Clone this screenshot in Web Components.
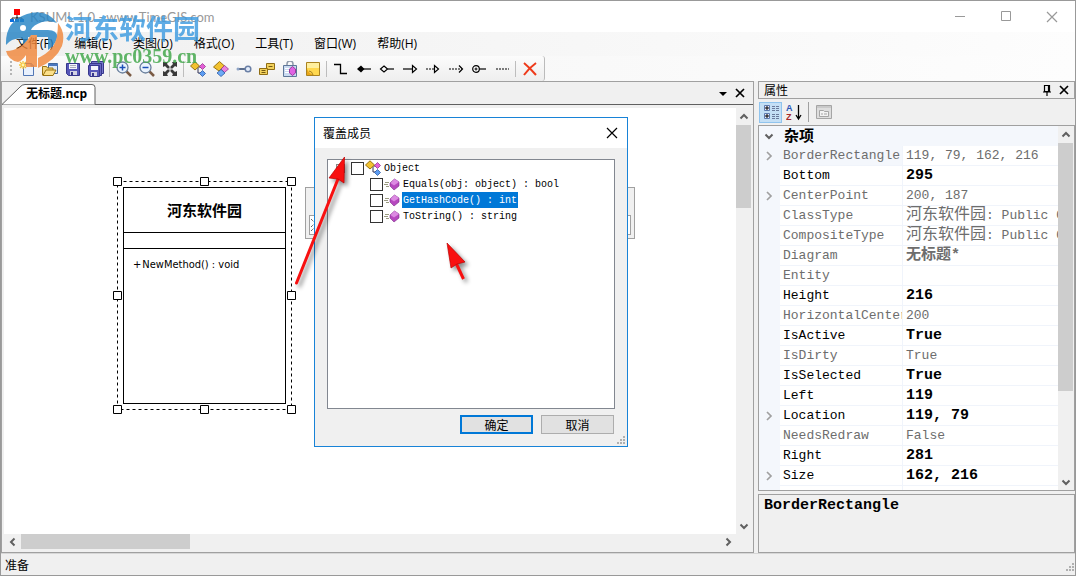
<!DOCTYPE html>
<html lang="zh-CN">
<head>
<meta charset="utf-8">
<title>KSUML 1.0 - www.TimeGIS.com</title>
<style>
html, body { margin: 0; height: 100%; }
body { font: 12px/16px "Liberation Sans", "Noto Sans CJK SC", sans-serif; color: #000; background: #f0f0f0; overflow: hidden; }
</style>
</head>
<body>
<ks-window>
  <ks-titlebar slot="top" text="KSUML 1.0 - www.TimeGIS.com"></ks-titlebar>
  <ks-menubar slot="top"></ks-menubar>
  <ks-toolbar slot="top"></ks-toolbar>
  <ks-document slot="main" name="无标题.ncp">
    <ks-member-bar></ks-member-bar>
    <ks-class-node name="河东软件园">NewMethod() : void</ks-class-node>
  </ks-document>
  <ks-properties slot="side"></ks-properties>
  <ks-statusbar slot="bottom">准备</ks-statusbar>
  <ks-override-dialog slot="over"></ks-override-dialog>
  <ks-arrows slot="over"></ks-arrows>
  <ks-watermark slot="over"></ks-watermark>
</ks-window>
<script>
const ICONS = {
  app: '<rect x="5" y="0" width="6" height="6" fill="#f00"/><path d="M8 6v3M3 11V9h10v2M8 8v3" stroke="#222" fill="none"/><path d="M1 10h4v3H1zM6 10h4v3H6zM11 10h4v3h-4z" fill="#0a6ede"/>',
  new: '<path d="M4.5 2.5h8l2 2v10h-10z" fill="#e9f1fd" stroke="#5277b5"/><path d="M12 2v3h3" fill="#9db9e6" stroke="#5277b5"/><path d="M4 0v8M0 4h8M1 1l6 6M7 1L1 7" stroke="#f5c33b" stroke-width="1.3"/><circle cx="4" cy="4" r="1.4" fill="#fff3b0"/>',
  open: '<path d="M6.500 2.500h9v10h-9z" fill="#dce9fa" stroke="#41689f"/><path d="M6 3h10v2H6z" fill="#4b77bd"/><path d="M.5 14V5.500h4l1 1.500h5.500v7z" fill="#f4d47a" stroke="#9a7410"/><path d="M1 14.500l3-5.500h10l-3 5.500z" fill="#fbe08b" stroke="#9a7410"/>',
  save: '<path d="M1.500 2.500h13v12h-11l-2-2z" fill="#5656b8" stroke="#37378c"/><path d="M4 3h8v5H4z" fill="#f4f4fc"/><path d="M5 10h7v4H5z" fill="#d4d4e4"/><path d="M6 11h2v3H6z" fill="#37378c"/><path d="M5 4.500h6M5 6.500h6" stroke="#aab"/>',
  saveall: '<path d="M3.500.500h12v12h-12z" fill="#7777cb" stroke="#37378c"/><path d="M1.500 2.500h12v12h-12z" fill="#6868c4" stroke="#37378c"/><path d="M.5 4.500h11v11H2l-1.500-2z" fill="#5656b8" stroke="#37378c"/><path d="M3 5h7v4H3z" fill="#f4f4fc"/><path d="M3 11h6v4H3z" fill="#d4d4e4"/><path d="M4 12h2v3H4z" fill="#37378c"/>',
  zoomin: '<path d="M10 10l5 5" stroke="#7b5b45" stroke-width="2.500"/><circle cx="6.500" cy="6.500" r="5.500" fill="#eaf3fd" stroke="#6a7f9c" stroke-width="1.300"/><path d="M3.500 6.500h6M6.500 3.500v6" stroke="#1c50b8" stroke-width="1.500"/>',
  zoomout: '<path d="M10 10l5 5" stroke="#7b5b45" stroke-width="2.500"/><circle cx="6.500" cy="6.500" r="5.500" fill="#eaf3fd" stroke="#6a7f9c" stroke-width="1.300"/><path d="M3.500 6.500h6" stroke="#1c50b8" stroke-width="1.500"/>',
  fit: '<path d="M1 1h5L5 3l2.500 2.500v2h-2L3 5 1 6zM15 1h-5l1 2-2.500 2.500v2h2L13 5l2 1zM1 15h5l-1-2 2.500-2.500v-2h-2L3 11l-2-1zM15 15h-5l1-2-2.500-2.500v-2h2L13 11l2-1z" fill="#3a3a3a"/>',
  cls: '<path d="M7 6h4M8 7v5h3" stroke="#335" fill="none"/><path d="M5 .800L9.500 5 5 9 .500 5z" fill="#f2c230" stroke="#9a7410"/><path d="M12.500 2.500l3 3-3 3-3-3z" fill="#e45fd6" stroke="#8d2a86" stroke-width=".7"/><path d="M12.500 9.500l3 3-3 3-3-3z" fill="#5c9cf2" stroke="#1d4d9c" stroke-width=".7"/>',
  struct: '<path d="M6.500.500L11.500 5 6 10 .500 6z" fill="#f2c230" stroke="#9a7410"/><path d="M11.500 4.500l4 3.500-4 3.500L8 8z" fill="#ea82de" stroke="#8d2a86" stroke-width=".7"/><path d="M8 8.500l4 3.500-4 3.500L4 12z" fill="#6eaaf6" stroke="#1d4d9c" stroke-width=".7"/>',
  iface: '<path d="M2 8h8" stroke="#5d6f8e" stroke-width="2"/><circle cx="2" cy="8" r="1.500" fill="#8fa4c6"/><circle cx="12" cy="8" r="2.800" fill="#e4edfb" stroke="#6a7fa5" stroke-width="1.500"/>',
  enum: '<path d="M7.500 2.500h8v6h-8z" fill="#f2d15c" stroke="#8f6d14"/><path d="M.5 7.500h8v6h-8z" fill="#f2d15c" stroke="#8f6d14"/><path d="M9.500 5.500h4M2.500 9.500h4M2.500 11.500h4" stroke="#745a12"/>',
  delegate: '<path d="M5 5V3a3 3 0 0 1 6 0v2" fill="none" stroke="#8f9aaa" stroke-width="1.500"/><path d="M1.500 4.500h13v11h-13z" fill="#c9daf0" stroke="#5d7698"/><path d="M3 7.500h5M3 9.500h4M3 11.500h4" stroke="#fff"/><path d="M10.500 5.500l3 2.500v4l-3 2.500-3-2.500V8z" fill="#e162e3" stroke="#963a9c"/>',
  note: '<path d="M1.500 1.500h13v13h-13z" fill="#ffd84f" stroke="#a9821f"/><path d="M2 2h12v5H2z" fill="#ffef9e"/><path d="M2 8q2 5 7 6H2z" fill="#e9a61a"/><path d="M4 10q3 0 4 4" fill="none" stroke="#a9821f"/>',
  line: '<path d="M1 3.500h6.500v9H14" fill="none" stroke="#000" stroke-width="1.300"/>',
  compose: '<path d="M5 8h10" stroke="#000" stroke-width="1.200"/><path d="M5 4.500L8.500 8 5 11.500 1 8z"/>',
  aggregate: '<path d="M8.500 8H15" stroke="#000" stroke-width="1.200"/><path d="M5 5l3.500 3L5 11 1.500 8z" fill="#fff" stroke="#000" stroke-width="1.200"/>',
  inherit: '<path d="M1 8h10" stroke="#000" stroke-width="1.200"/><path d="M10.500 4.500v7L14.500 8z" fill="#fff" stroke="#000" stroke-width="1.200"/>',
  realize: '<path d="M1 8h9" stroke="#000" stroke-dasharray="2 1" stroke-width="1.200"/><path d="M9.500 4.500v7l4-3.500z" fill="#fff" stroke="#000" stroke-width="1.200"/>',
  depend: '<path d="M1 8h13" stroke="#000" stroke-dasharray="2 1" stroke-width="1.200"/><path d="M11 4.500L14.500 8 11 11.500" fill="none" stroke="#000" stroke-width="1.200"/>',
  nest: '<path d="M8 8h7" stroke="#000" stroke-width="1.200"/><circle cx="5" cy="8" r="3.300" fill="#fff" stroke="#000" stroke-width="1.200"/><path d="M3.500 8h3M5 6.500v3" stroke="#000"/>',
  dots: '<path d="M2 8h13" stroke="#000" stroke-dasharray="2 1" stroke-width="1.200"/>',
  del: '<path d="M2 2q6 5 12 12M14 2Q7 7 2 14" fill="none" stroke="#ee3a1a" stroke-width="2"/>',
  method: '<path d="M1 6.500h4M0 8.500h4M2 10.500h3" stroke="#9a9a80"/><path d="M10.500 3L15 6v4l-5 4-4-4V7z" fill="#b648bf" stroke="#7c2c88" stroke-width=".6"/><path d="M10.500 3L15 6l-5 3.500L6.500 7z" fill="#dc8ae2"/>',
  category: '<path d="M1.500 1.500h5v5h-5zM1.500 9.500h5v5h-5z" fill="#eef" stroke="#5d79ac"/><path d="M2 4h4M4 2v4M2 12h4M4 10v4" stroke="#000"/><path d="M9 2.500h3M13 2.500h3M9 4.500h3M13 4.500h3M9 6.500h3M13 6.500h3M9 10.500h3M13 10.500h3M9 12.500h3M13 12.500h3M9 14.500h3M13 14.500h3" stroke="#6a7a9a"/>',
  page: '<path d="M.5 1.500h15v13H.500z" fill="#dedede" stroke="#a5a5a5"/><path d="M1 3h14" stroke="#b5b5b5"/><path d="M3.500 6.500h4l1 1h4v5h-9z" fill="#f2f2f2" stroke="#a5a5a5"/><path d="M5 10h2M8 10h3" stroke="#a5a5a5"/>',
  pin: '<path d="M5.500 3.500h5v6h-5zM9.500 4v5M4 10h8M8 10v4" fill="none" stroke="#000" stroke-width="1.200"/>',
  cross: '<path d="M4 4l8 8M12 4l-8 8" stroke="#000" stroke-width="1.700"/>',
  thinx: '<path d="M3 3l10 10M13 3L3 13" stroke="currentColor" stroke-width="1.200"/>',
  min: '<path d="M3 7.500h10" stroke="currentColor"/>',
  max: '<path d="M3.500 2.500h9v9h-9z" fill="none" stroke="currentColor"/>',
  drop: '<path d="M4 7h8l-4 4z"/>',
  up: '<path d="M4.500 9.500L8 6l3.500 3.500" fill="none" stroke="#606060" stroke-width="2"/>',
  down: '<path d="M4.500 6.500L8 10l3.500-3.500" fill="none" stroke="#606060" stroke-width="2"/>',
  left: '<path d="M9.500 4.500L6 8l3.500 3.500" fill="none" stroke="#606060" stroke-width="2"/>',
  right: '<path d="M6.500 4.500L10 8l-3.500 3.500" fill="none" stroke="#606060" stroke-width="2"/>',
  expand: '<path d="M6 4l4 4-4 4" fill="none" stroke="#a0a0a0" stroke-width="1.700"/>',
  grip: '<path d="M13 6h2v2h-2zM10 9h2v2h-2zM13 9h2v2h-2zM7 12h2v2H7zM10 12h2v2h-2zM13 12h2v2h-2z" fill="#b0b0b0"/>'
};

function component(tag, html, setup) {
  customElements.define(tag, class extends HTMLElement {
    connectedCallback() {
      if (this.shadowRoot) return;
      const root = this.attachShadow({ mode: 'open' });
      const tpl = document.createElement('template');
      tpl.innerHTML = '<style>*{box-sizing:border-box}button{font:inherit;color:inherit;border:0;padding:0;margin:0;background:none}</style>' + html;
      root.append(tpl.content.cloneNode(true));
      if (setup) setup(this, root);
    }
  });
}

component('ks-icon', '<style>:host{display:block;flex:none;width:16px;height:16px}svg{display:block}</style><svg width="16" height="16" viewBox="0 0 16 16" aria-hidden="true"></svg>',
  (el, root) => { root.querySelector('svg').innerHTML = ICONS[el.getAttribute('name')]; });

component('ks-window', `<style>
  :host{position:relative;display:flex;flex-direction:column;box-sizing:border-box;height:100vh;border:1px solid #999;background:#f0f0f0}
  .work{flex:1;min-height:0;display:grid;grid-template-columns:minmax(0,1fr) 317px;gap:4px}
</style>
<slot name="top"></slot>
<div class="work"><slot name="main"></slot><slot name="side"></slot></div>
<slot name="bottom"></slot><slot name="over"></slot>`);

component('ks-titlebar', `<style>
  :host{display:flex;align-items:center;height:31px;background:#fff;color:#999;padding-left:8px;box-sizing:border-box}
  h1{flex:1;margin:0 0 0 5px;font:13px/18px Lato,sans-serif}
  button{width:46px;height:28px;display:grid;place-items:center;color:#999}
</style>
<ks-icon name="app"></ks-icon><h1></h1>
<button aria-label="最小化"><ks-icon name="min"></ks-icon></button>
<button aria-label="最大化"><ks-icon name="max"></ks-icon></button>
<button aria-label="关闭"><ks-icon name="thinx"></ks-icon></button>`,
  (el, root) => { root.querySelector('h1').textContent = el.getAttribute('text'); });

component('ks-menubar', `<style>
  :host{display:flex;align-items:center;height:24px;padding-left:15px;gap:21px;background:linear-gradient(90deg,#f0f0f0,#fdfdfd)}
  button{font:12px/16px "Open Sans","Noto Sans CJK SC",sans-serif}
</style>
<button>文件(F)</button><button>编辑(E)</button><button>类图(D)</button><button>格式(O)</button><button>工具(T)</button><button>窗口(W)</button><button>帮助(H)</button>`);

component('ks-toolbar', `<style>
  :host{display:flex;height:25px;background:linear-gradient(90deg,#f4f4f4,#fdfdfd)}
  div{display:flex;align-items:center;padding:0 3px 0 14px;background:linear-gradient(#fcfcfc,#eeeeee);border-radius:0 3px 3px 0;border-right:1px solid #bbb;position:relative}
  div::before{content:"";position:absolute;left:9px;top:5px;width:2px;height:14px;background:repeating-linear-gradient(#b5b5b5 0 2px,transparent 2px 4px)}
  button{width:23px;height:24px;display:grid;place-items:center}
  i{width:1px;height:16px;margin:0 2px;background:#bdbdbd}
</style><div></div>`, (el, root) => {
  root.querySelector('div').innerHTML = 'new open save saveall | zoomin zoomout fit | cls struct iface enum delegate note | line compose aggregate inherit realize depend nest dots | del'
    .split(' ').map(n => n === '|' ? '<i></i>' : `<button aria-label="${n}"><ks-icon name="${n}"></ks-icon></button>`).join('');
});

component('ks-scrollbar', `<style>
  :host{display:flex;background:#f0f0f0;flex-direction:column;overflow:hidden}
  :host([horizontal]){flex-direction:row}
  .track{flex:1;min-height:0;min-width:0;display:flex;flex-direction:inherit}
  .thumb{background:#cdcdcd;flex:0 0 var(--thumb)}
  button{width:15px;height:17px;display:grid;place-items:center}
  :host([horizontal]) button{width:17px;height:15px}
</style>
<button><ks-icon></ks-icon></button><div class="track"><div class="thumb"></div></div><button><ks-icon></ks-icon></button>`,
  (el, root) => {
    const h = el.hasAttribute('horizontal');
    root.querySelectorAll('button').forEach((b, i) => {
      const n = h ? ['left', 'right'][i] : ['up', 'down'][i];
      b.setAttribute('aria-label', n);
      b.innerHTML = `<ks-icon name="${n}"></ks-icon>`;
    });
  });

component('ks-document', `<style>
  :host{display:flex;flex-direction:column;min-width:0;border:1px solid #a0a0a0;background:#f0f0f0}
  header{flex:none;display:flex;align-items:flex-end;height:23px;border-bottom:1px solid #606060;padding-right:5px}
  .tab{position:relative;width:96px;height:21px;margin-bottom:-1px}
  .tab svg{position:absolute;inset:0}
  .tab button{position:relative;padding-left:24px;height:20px;font:bold 12px/18px "Open Sans","Noto Sans CJK SC",sans-serif;white-space:nowrap;display:block}
  .fill{flex:1}
  .tool{width:17px;height:22px;display:grid;place-items:center}
  .body{flex:1;min-height:0;display:grid;grid-template:minmax(0,1fr) 15px/minmax(0,1fr) 15px;padding:3px 2px}
  .canvas{position:relative;background:#fff;overflow:hidden}
</style>
<header><div class="tab"><svg width="96" height="21"><path d="M0 20.500L18 3Q20 .500 23 .500h67q3 0 3 3v17" fill="#fff" stroke="#606060"/></svg><button></button></div><span class="fill"></span>
<button class="tool" aria-label="列表"><ks-icon name="drop"></ks-icon></button><button class="tool" aria-label="关闭"><ks-icon name="cross"></ks-icon></button></header>
<div class="body"><div class="canvas"><slot></slot></div><ks-scrollbar style="--thumb:83px"></ks-scrollbar><ks-scrollbar horizontal style="--thumb:169px"></ks-scrollbar></div>`,
  (el, root) => { root.querySelector('.tab button').textContent = el.getAttribute('name'); });

component('ks-member-bar', `<style>
  :host{position:absolute;left:301px;top:79px;width:330px;height:52px;box-sizing:border-box;border:1px solid #a0a0a0;background:#f0f0f0;padding:27px 3px 3px}
  div{height:100%;border:1px solid #a0a0a0;background:#fff;overflow:hidden}
  svg{display:block}
</style><div><svg width="16" height="20"><path d="M1 3l4 4M1 11l4-4M1 15l3-3" stroke="#222" stroke-dasharray="1 1" fill="none"/></svg></div>`);

component('ks-class-node', `<style>
  :host{position:absolute;left:113px;top:73px;width:175px;height:229px;box-sizing:border-box;padding:6px}
  svg{position:absolute;inset:0;overflow:visible}
  section{display:flex;flex-direction:column;height:100%;border:1px solid #000;background:#fff}
  h2{margin:0;height:45px;border-bottom:1px solid #000;font:bold 15px/44px "Noto Sans CJK SC",sans-serif;text-align:center}
  .fields{height:16px;border-bottom:1px solid #000}
  .methods{padding:8px 9px;font:11px/16px "DejaVu Sans Condensed","Open Sans",sans-serif;display:flex;gap:1px;white-space:nowrap}
</style>
<section><h2></h2><div class="fields"></div><div class="methods"><span>+</span><slot></slot></div></section>
<svg width="175" height="229"><rect x=".5" y=".5" width="174" height="228" fill="none" stroke="#000" stroke-dasharray="3 3"/><g fill="#fff" stroke="#000"></g></svg>`,
  (el, root) => {
    root.querySelector('h2').textContent = el.getAttribute('name');
    root.querySelector('g').innerHTML = [[0,0],[87,0],[174,0],[0,114],[174,114],[0,228],[87,228],[174,228]]
      .map(([x, y]) => `<path d="M${x - 3.5} ${y - 3.5}h8v8h-8z"/>`).join('');
  });

component('ks-properties', `<style>
  :host{display:flex;flex-direction:column;min-height:0;color:#000}
  header{flex:none;height:18px;display:flex;align-items:center;border:1px solid #a0a0a0;padding:0 2px 0 5px}
  h2{flex:1;margin:0;font:12px/16px "Noto Sans CJK SC",sans-serif}
  header button{width:17px;height:16px;display:grid;place-items:center}
  .tools{flex:none;height:26px;display:flex;align-items:center;padding-left:1px}
  .tools button{width:23px;height:21px;display:grid;place-items:center}
  .tools button.on{background:#c4dff5;outline:1px solid #90c4ee;outline-offset:-1px}
  .tools i{width:1px;height:20px;background:#a0a0a0;margin:0 3px}
  .grid{flex:1;min-height:0;display:grid;grid-template-columns:minmax(0,1fr) 15px;border:1px solid #a0a0a0;padding-right:1px;background:#f0f0f0}
  .view{overflow:hidden;background:#fff}
  table{width:100%;table-layout:fixed;border-collapse:separate;border-spacing:0;font:13px/18px "Liberation Mono","Noto Sans CJK SC",monospace}
  td,th{height:20px;padding:1px 0 0;border-bottom:1px solid #f0f4fb;white-space:nowrap;overflow:hidden;text-align:left;font-weight:normal}
  th,td.v{padding-left:3px}
  th{border-right:1px solid #f0f4fb}
  td.x{background:#f4f7fc;border-color:#f4f7fc}
  td.x ks-icon{margin-left:2px}
  .dim{color:#6d6d6d}
  tr.sel th{background:#f4f7fc}
  b{font-size:15px}
  .cjk{font-size:16px;line-height:12px}
  tr.cat th{background:#f4f7fc;font-weight:bold;font-size:15px;line-height:16px;border:0;padding:4px 0 0 4px}
  .desc{flex:none;height:59px;margin-top:3px;border:1px solid #a0a0a0;padding:2px 5px;font:bold 15px/18px "Liberation Mono",monospace}
</style>
<header><h2>属性</h2><button aria-label="固定"><ks-icon name="pin"></ks-icon></button><button aria-label="关闭"><ks-icon name="cross"></ks-icon></button></header>
<div class="tools"><button class="on" aria-label="按分类"><ks-icon name="category"></ks-icon></button>
<button aria-label="按字母"><svg width="16" height="18"><text x="0" y="8" font-family="Liberation Sans" font-weight="bold" font-size="9" fill="#2a55b5">A</text><text x="0" y="17" font-family="Liberation Sans" font-weight="bold" font-size="9" fill="#a62a2a">Z</text><path d="M12.500 2v13M10 12l2.500 4 2.500-4" fill="none" stroke="#000" stroke-width="1.300"/></svg></button><i></i><button aria-label="属性页"><ks-icon name="page"></ks-icon></button></div>
<div class="grid"><div class="view"><table><colgroup><col style="width:21px"><col style="width:123px"><col></colgroup><tbody></tbody></table></div><ks-scrollbar style="--thumb:248px"></ks-scrollbar></div>
<div class="desc">BorderRectangle</div>`, (el, root) => {
  const cls = '<span class="cjk">河东软件园</span>: Public Class';
  const rows = [['BorderRectangle', '119, 79, 162, 216', 0, 1], ['Bottom', '295', 1], ['CenterPoint', '200, 187', 0, 1], ['ClassType', cls, 0], ['CompositeType', cls, 0],
    ['Diagram', '<b>无标题*</b>', 0], ['Entity', '', 0], ['Height', '216', 1], ['HorizontalCenter', '200', 0], ['IsActive', 'True', 1], ['IsDirty', 'True', 0], ['IsSelected', 'True', 1],
    ['Left', '119', 1], ['Location', '119, 79', 1, 1], ['NeedsRedraw', 'False', 0], ['Right', '281', 1], ['Size', '162, 216', 1, 1], ['', '', 0]];
  root.querySelector('tbody').innerHTML = '<tr class="cat"><td class="x"><ks-icon name="down"></ks-icon></td><th colspan="2">杂项</th></tr>' +
    rows.map(([n, v, on, ex], i) => `<tr class="${on ? '' : 'dim'}${i ? '' : ' sel'}"><td class="x">${ex ? '<ks-icon name="expand"></ks-icon>' : ''}</td><th scope="row">${n}</th><td class="v">${on ? `<b>${v}</b>` : v}</td></tr>`).join('');
});

component('ks-statusbar', `<style>
  :host{display:flex;align-items:center;justify-content:space-between;height:22px;padding-left:4px;border-top:1px solid #d7d7d7;box-sizing:border-box;font:12px/16px "Noto Sans CJK SC",sans-serif}
</style><span><slot></slot></span><ks-icon name="grip"></ks-icon>`);

component('ks-override-dialog', `<style>
  :host{position:absolute;left:313px;top:116px;width:314px;height:330px;box-sizing:border-box;display:flex;flex-direction:column;border:1px solid #1883d7;background:#f0f0f0;font:12px/16px "Noto Sans CJK SC",sans-serif}
  header{flex:none;height:30px;background:#fff;display:flex;align-items:center;justify-content:space-between;padding:0 7px 0 8px}
  h2{margin:0;font:inherit}
  header button{display:grid}
  ul{list-style:none;margin:0;padding:0}
  .tree{flex:1;margin:11px 12px 0;border:1px solid #828790;background:#fff;padding:0 0 0 8px;font:10px/18px "Liberation Mono",monospace}
  .tree ul{padding-left:34px}
  .row{display:flex;align-items:center;height:16px}
  .exp{width:9px;height:9px;border:1px solid #888;margin-right:6px}
  input{appearance:none;width:13px;height:13px;margin:0;border:1px solid #333;background:#fff;flex:none}
  label{display:flex;gap:2px;padding-left:1px;white-space:pre}
  label span{padding:0 1px;height:16px}
  .sel span{background:#0078d7;color:#fff}
  footer{flex:none;display:flex;justify-content:flex-end;gap:8px;padding:6px 13px 12px}
  footer button{width:73px;height:19px;background:#e1e1e1;border:1px solid #adadad;line-height:14px}
  footer button.ok{border:2px solid #0078d7}
  .grip{position:absolute;right:1px;bottom:0}
</style>
<header><h2>覆盖成员</h2><button aria-label="关闭"><ks-icon name="thinx"></ks-icon></button></header>
<div class="tree"><div class="row"><span class="exp"></span><input type="checkbox" id="o"><label for="o"><ks-icon name="cls"></ks-icon><span>Object</span></label></div>
<ul>
<li class="row"><input type="checkbox" id="a"><label for="a"><ks-icon name="method"></ks-icon><span>Equals(obj: object) : bool</span></label></li>
<li class="row sel"><input type="checkbox" id="b"><label for="b"><ks-icon name="method"></ks-icon><span>GetHashCode() : int</span></label></li>
<li class="row"><input type="checkbox" id="c"><label for="c"><ks-icon name="method"></ks-icon><span>ToString() : string</span></label></li>
</ul></div>
<footer><button class="ok">确定</button><button>取消</button></footer><ks-icon class="grip" name="grip"></ks-icon>`);

component('ks-arrows', `<style>
  :host{position:absolute;left:289px;top:149px;pointer-events:none}
  svg{display:block;filter:drop-shadow(3px 3px 2px rgba(0,0,0,.45))}
</style><svg width="190" height="145" viewBox="290 150 190 145"><g fill="#f81010" stroke="#f81010"><path d="M296.500 283L338 179" stroke-width="3" stroke-linecap="round"/><path d="M344.500 157l-.5 26-6-4-9-1z" stroke="#b00" stroke-width=".7"/><path d="M463.500 279l-7-15" stroke-width="3"/><path d="M447 243l4 25 6-4 8-2z" stroke="#b00" stroke-width=".7"/></g></svg>`);

component('ks-watermark', `<style>
  :host{position:absolute;left:4px;top:8px;display:flex;align-items:center;pointer-events:none;opacity:.82}
  svg{display:block;flex:none}
  .t{display:flex;flex-direction:column;margin-left:1px;padding-top:4px;white-space:nowrap}
  .cn{font:bold 27px/30px "Noto Sans CJK SC",sans-serif;color:#3c9be0}
  .url{font:bold 20px/26px "Liberation Serif",serif;color:#3fa648}
</style>
<svg width="59" height="60" viewBox="0 0 59 60"><path d="M1 36Q0 12 22 5q19-6 30 9-7-3-15-1-9 3-11 8h17q10 0 9 8-1 6-9 12V28H32v8l-5-8h-4v7q-3 2-5 4v-9Q8 28 1 36z" fill="#2684c5"/><path d="M53 14q8 10 4 23-6 14-24 22V49q17-8 19-22 1-8 1-13z" fill="#f1883c"/><path d="M1 42q15 0 25-16h6v32H21V46q-4 6-8 7-10-2-12-11z" fill="#f1883c"/><circle cx="18" cy="19" r="3" fill="#fff"/></svg>
<div class="t"><span class="cn">河东软件园</span><span class="url">www.pc0359.cn</span></div>`);
</script>
</body>
</html>
